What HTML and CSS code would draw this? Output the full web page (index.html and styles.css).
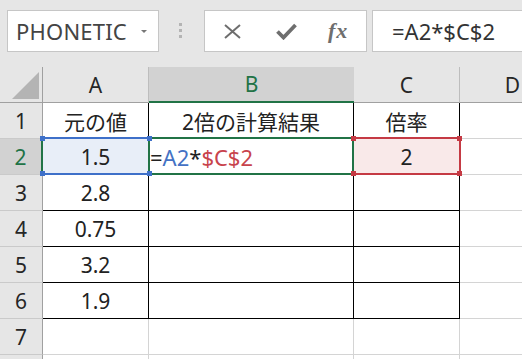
FILE: index.html
```html
<!DOCTYPE html>
<html lang="ja">
<head>
    <meta charset="UTF-8">
    <title>Sheet</title>
    <link rel="stylesheet" href="styles.css">
</head>
<body>
    <div class="topbar">
        <div class="namebox">
            <span class="name">PHONETIC</span>
            <span class="caret"></span>
        </div>
        <div class="grip"><span></span><span></span><span></span></div>
        <div class="fxbuttons">
            <svg class="ico-x" width="19" height="15" viewBox="0 0 19 15">
                <path d="M2 1 L17 14 M17 1 L2 14" stroke="#6e6e6e" stroke-width="2" fill="none"/>
            </svg>
            <svg class="ico-ok" width="21" height="17" viewBox="0 0 21 17">
                <path d="M1.5 8.5 L7.5 14.5 L19.5 2" stroke="#6e6e6e" stroke-width="3.8" fill="none"/>
            </svg>
            <span class="fx">fx</span>
        </div>
        <div class="formula">=A2*$C$2</div>
    </div>

    <div class="sheet">
        <!-- header row -->
        <div class="corner"><span class="tri"></span></div>
        <div class="ch">A</div>
        <div class="ch sel">B</div>
        <div class="ch">C</div>
        <div class="ch">D</div>

        <div class="rh">1</div>
        <div class="c t">元の値</div>
        <div class="c t">2倍の計算結果</div>
        <div class="c t">倍率</div>
        <div class="c"></div>

        <div class="rh sel">2</div>
        <div class="c t ref-a">
            1.5
            <div class="range blue"><i class="sq tl"></i><i class="sq tr"></i><i class="sq bl"></i><i class="sq br"></i></div>
        </div>
        <div class="c t edit">
            <span>=</span><span class="r-a">A2</span><span>*</span><span class="r-c">$C$2</span>
            <div class="active"></div>
        </div>
        <div class="c t ref-c">
            2
            <div class="range red"><i class="sq tl"></i><i class="sq tr"></i><i class="sq bl"></i><i class="sq br"></i></div>
        </div>
        <div class="c"></div>

        <div class="rh">3</div>
        <div class="c t">2.8</div>
        <div class="c t"></div>
        <div class="c t"></div>
        <div class="c"></div>

        <div class="rh">4</div>
        <div class="c t">0.75</div>
        <div class="c t"></div>
        <div class="c t"></div>
        <div class="c"></div>

        <div class="rh">5</div>
        <div class="c t">3.2</div>
        <div class="c t"></div>
        <div class="c t"></div>
        <div class="c"></div>

        <div class="rh">6</div>
        <div class="c t">1.9</div>
        <div class="c t"></div>
        <div class="c t"></div>
        <div class="c"></div>

        <div class="rh">7</div>
        <div class="c"></div>
        <div class="c"></div>
        <div class="c"></div>
        <div class="c"></div>

        <div class="rh"></div>
        <div class="c"></div>
        <div class="c"></div>
        <div class="c"></div>
        <div class="c"></div>
    </div>
</body>
</html>
```

FILE: styles.css
```css
body {
    margin: 0;
    width: 522px;
    height: 359px;
    overflow: hidden;
    background: #e6e6e6;
    font-family: "Noto Sans", "Noto Sans CJK JP", sans-serif;
    color: #222;
}

/* formula bar */
.topbar {
    display: flex;
    align-items: flex-start;
    height: 67px;
    padding: 10px 0 0 7px;
    box-sizing: border-box;
}

.namebox {
    display: flex;
    align-items: center;
    width: 152px;
    height: 42px;
    box-sizing: border-box;
    padding-left: 8px;
    background: #fff;
    border: 1px solid #c6c6c6;
}

.name {
    font-size: 22px;
    color: #444;
    letter-spacing: 0.2px;
}

.caret {
    margin-left: auto;
    margin-right: 11px;
    width: 0;
    height: 0;
    border-left: 3px solid transparent;
    border-right: 3px solid transparent;
    border-top: 3px solid #777;
}

.grip {
    display: flex;
    flex-direction: column;
    gap: 3px;
    margin: 13px 22px 0 20px;
}

.grip span {
    width: 3px;
    height: 3px;
    background: #b4b4b4;
}

.fxbuttons {
    display: flex;
    align-items: center;
    width: 163px;
    height: 42px;
    box-sizing: border-box;
    padding-left: 18px;
    background: #fff;
    border: 1px solid #c6c6c6;
}

.ico-ok {
    margin-left: 34px;
}

.fx {
    margin-left: 31px;
    font-family: "Liberation Serif", serif;
    font-style: italic;
    font-weight: bold;
    font-size: 22px;
    letter-spacing: 1px;
    color: #6e6e6e;
    line-height: 1;
}

.formula {
    flex: 1;
    height: 42px;
    box-sizing: border-box;
    margin-left: 5px;
    padding-left: 19px;
    line-height: 40px;
    font-size: 22px;
    color: #333;
    background: #fff;
    border: 1px solid #c6c6c6;
    border-right: none;
}

/* grid */
.sheet {
    display: grid;
    grid-template-columns: 43px 106px 205px 106px 106px;
    grid-template-rows: repeat(9, 36px);
    background: #fff;
}

.sheet > div {
    box-sizing: border-box;
    display: flex;
    align-items: center;
    justify-content: center;
    font-size: 21px;
}

.corner {
    background: #e6e6e6;
    border-right: 1px solid #a0a0a0;
    border-bottom: 1px solid #a0a0a0;
    align-items: flex-end !important;
    justify-content: flex-end !important;
    padding: 0 3px 3px 0;
}

.tri {
    width: 27px;
    height: 27px;
    background: #b4b4b4;
    clip-path: polygon(100% 0, 100% 100%, 0 100%);
}

.ch {
    background: #e6e6e6;
    border-right: 1px solid #bdbdbd;
    border-bottom: 1px solid #a0a0a0;
    color: #262626;
}

.ch.sel {
    background: #d2d2d2;
    color: #217346;
    border-right: none;
    border-bottom: 2px solid #217346;
}

.rh {
    background: #e6e6e6;
    border-right: 1px solid #a0a0a0;
    border-bottom: 1px solid #cacaca;
    color: #262626;
}

.rh.sel {
    background: #d2d2d2;
    color: #217346;
    border-right: 2px solid #217346;
}

.c {
    border-right: 1px solid #d4d4d4;
    border-bottom: 1px solid #d4d4d4;
    color: #222;
}

.c.t {
    border-right-color: #000;
    border-bottom-color: #000;
}

/* range references while editing */
.ref-a {
    position: relative;
    background: #e8eef8;
}

.ref-c {
    position: relative;
    background: #f9e9e9;
}

.edit {
    position: relative;
    justify-content: flex-start !important;
    padding-left: 1px;
    font-size: 22px !important;
}

.r-a {
    color: #4472c4;
}

.r-c {
    color: #c8434c;
}

.range {
    position: absolute;
    top: -2px;
    bottom: -1px;
    box-sizing: border-box;
}

.range.blue {
    left: -1px;
    right: -1px;
    border-top: 2px solid #3e70c9;
    border-bottom: 2px solid #3e70c9;
}

.range.red {
    left: -1px;
    right: -2px;
    border-top: 2px solid #c53a44;
    border-bottom: 2px solid #c53a44;
    border-right: 2px solid #c53a44;
}

.active {
    position: absolute;
    top: -2px;
    bottom: -1px;
    left: -1px;
    right: -1px;
    border: 2px solid #217346;
}

.sq {
    position: absolute;
    width: 5px;
    height: 5px;
    z-index: 2;
}

.blue .sq {
    background: #3e70c9;
}

.red .sq {
    background: #c53a44;
}

.sq.tl { left: -2px; top: -3px; }
.sq.tr { right: -3px; top: -3px; }
.sq.bl { left: -2px; bottom: -3px; }
.sq.br { right: -3px; bottom: -3px; }
```
